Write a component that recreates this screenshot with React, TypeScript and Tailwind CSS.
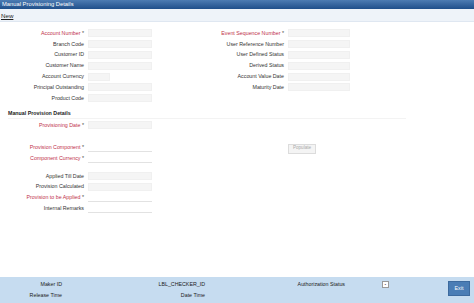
import React from "react"

type FieldProps = {
  label: string
  required?: boolean
  inputWidth?: string
  underline?: boolean
}

const labelBox = "w-[88px] text-right pr-[4px] whitespace-nowrap"

const Field = ({ label, required, inputWidth = "w-[64px]", underline }: FieldProps) => (
  <div className="flex items-center h-[10.8px]">
    <div className={labelBox}>
      {required ? (
        <span className="text-[#c0304a]">
          {label} <span className="text-[#444]">*</span>
        </span>
      ) : (
        <span className="text-[#333]">{label}</span>
      )}
    </div>
    <div
      className={`${inputWidth} h-[8px] ${
        underline ? "bg-white border-b border-[#e2e2e2]" : "bg-[#f5f5f5] border border-[#f0f0f0]"
      }`}
    />
  </div>
)

const App = () => {
  return (
    <div
      className="w-[474px] h-[303px] flex flex-col bg-white text-[5.3px] leading-none overflow-hidden"
      style={{ fontFamily: '"Liberation Sans", Arial, sans-serif' }}
    >
      {/* title bar */}
      <div className="h-[9px] flex items-center px-[2px] bg-gradient-to-b from-[#4d7cb3] to-[#1f4f8a] text-white text-[5.8px]">
        Manual Provisioning Details
      </div>
      <div className="h-[13px] flex items-center pt-[2px] px-[1px] bg-[#eef3f9] border-b border-[#dfe7f1]">
        <span className="underline text-[#222] text-[6.2px]">New</span>
      </div>

      {/* header fields */}
      <div className="flex pt-[6px]">
        <div className="w-[200px] flex flex-col">
          <Field label="Account Number" required />
          <Field label="Branch Code" />
          <Field label="Customer ID" />
          <Field label="Customer Name" />
          <Field label="Account Currency" inputWidth="w-[22px]" />
          <Field label="Principal Outstanding" />
          <Field label="Product Code" />
        </div>
        <div className="flex flex-col">
          <Field label="Event Sequence Number" required inputWidth="w-[62px]" />
          <Field label="User Reference Number" inputWidth="w-[62px]" />
          <Field label="User Defined Status" inputWidth="w-[62px]" />
          <Field label="Derived Status" inputWidth="w-[62px]" />
          <Field label="Account Value Date" inputWidth="w-[62px]" />
          <Field label="Maturity Date" inputWidth="w-[62px]" />
        </div>
      </div>

      {/* provision details */}
      <div className="mt-[7px] ml-[8px] mr-[68px] pb-[2px] border-b border-[#f3f3f3] font-bold text-[#222]">
        Manual Provision Details
      </div>
      <div className="flex flex-col mt-[1px]">
        <Field label="Provisioning Date" required />
      </div>
      <div className="flex mt-[12px]">
        <div className="w-[200px] flex flex-col">
          <Field label="Provision Component" required underline />
          <Field label="Component Currency" required underline />
        </div>
        <div className="pl-[88px]">
          <div className="w-[28px] h-[10px] mt-[1px] flex items-center justify-center bg-[#f4f4f4] border border-[#dcdcdc] text-[#aaa] text-[4.6px]">
            Populate
          </div>
        </div>
      </div>
      <div className="flex flex-col mt-[6.5px]">
        <Field label="Applied Till Date" />
        <Field label="Provision Calculated" />
        <Field label="Provision to be Applied" required underline />
        <Field label="Internal Remarks" underline />
      </div>

      <div className="flex-1" />

      {/* footer */}
      <div className="h-[26px] bg-[#c6dcf0] flex items-center text-[#222]">
        <div className="flex flex-col gap-[5.5px] w-[62px] items-end">
          <span>Maker ID</span>
          <span>Release Time</span>
        </div>
        <div className="flex flex-col gap-[5.5px] w-[143px] items-end">
          <span>LBL_CHECKER_ID</span>
          <span>Date Time</span>
        </div>
        <div className="flex flex-col w-[140px] items-end self-start pt-[5px]">
          <span>Authorization Status</span>
        </div>
        <div className="self-start pt-[4px] pl-[37px]">
          <div className="w-[7px] h-[7px] bg-white border border-[#999] flex items-center justify-center text-[4px] text-[#555]">
            ▪
          </div>
        </div>
        <div className="flex-1" />
        <div className="w-[22px] h-[15px] mr-[4px] -mt-[3px] bg-[#4a7db5] border border-[#3c6a9e] text-white flex items-center justify-center">
          Exit
        </div>
      </div>
    </div>
  )
}

export default App
